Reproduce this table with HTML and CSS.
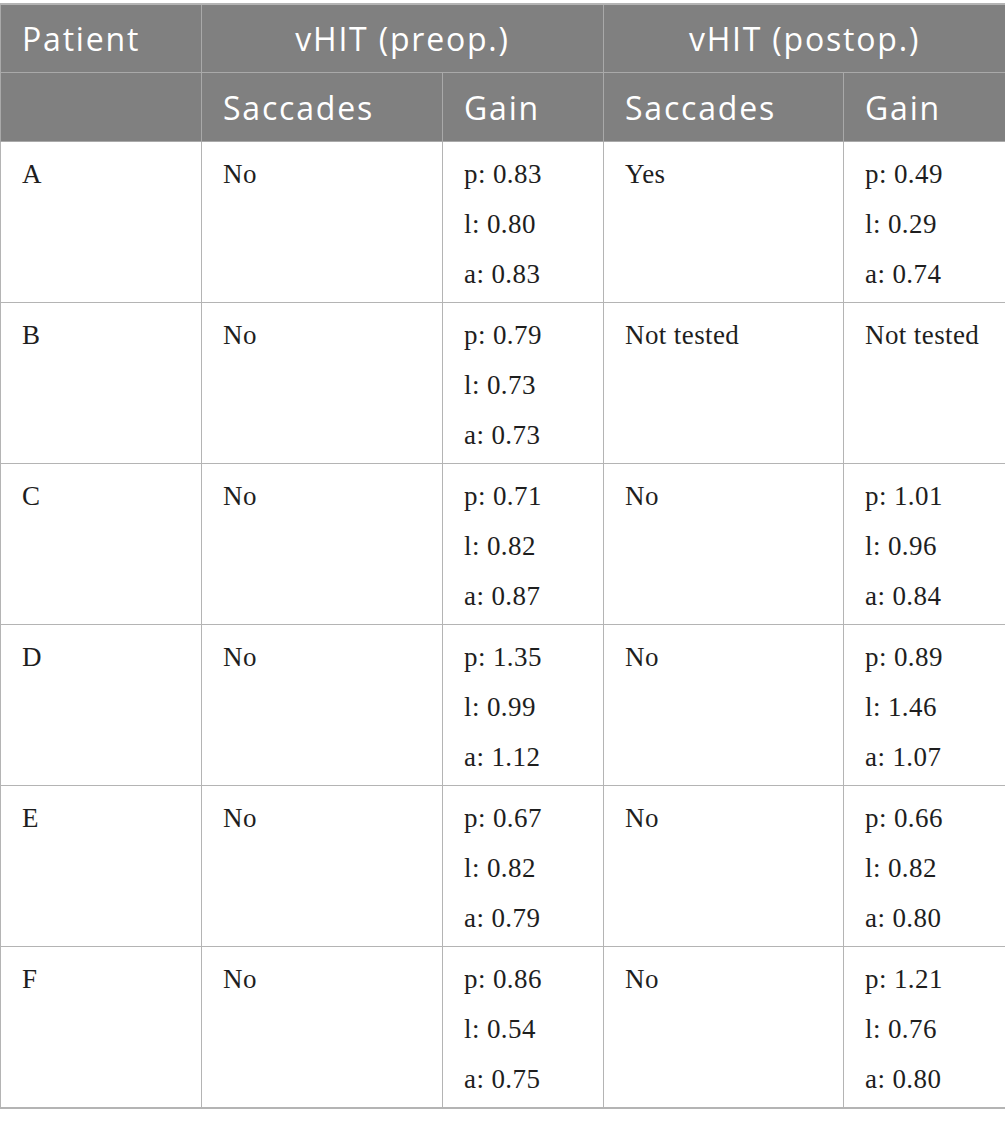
FILE: index.html
```html
<!DOCTYPE html>
<html>
<head>
<meta charset="utf-8">
<link rel="stylesheet" href="styles.css">
</head>
<body>
<table class="data">
  <colgroup>
    <col class="c1"><col class="c2"><col class="c3"><col class="c4"><col class="c5">
  </colgroup>
  <thead>
    <tr class="h1">
      <th>Patient</th>
      <th colspan="2" class="center">vHIT (preop.)</th>
      <th colspan="2" class="center">vHIT (postop.)</th>
    </tr>
    <tr class="h2">
      <th></th>
      <th>Saccades</th>
      <th>Gain</th>
      <th>Saccades</th>
      <th>Gain</th>
    </tr>
  </thead>
  <tbody>
    <tr><td>A</td><td>No</td><td><div>p: 0.83</div><div>l: 0.80</div><div>a: 0.83</div></td><td>Yes</td><td><div>p: 0.49</div><div>l: 0.29</div><div>a: 0.74</div></td></tr>
    <tr><td>B</td><td>No</td><td><div>p: 0.79</div><div>l: 0.73</div><div>a: 0.73</div></td><td>Not tested</td><td>Not tested</td></tr>
    <tr><td>C</td><td>No</td><td><div>p: 0.71</div><div>l: 0.82</div><div>a: 0.87</div></td><td>No</td><td><div>p: 1.01</div><div>l: 0.96</div><div>a: 0.84</div></td></tr>
    <tr><td>D</td><td>No</td><td><div>p: 1.35</div><div>l: 0.99</div><div>a: 1.12</div></td><td>No</td><td><div>p: 0.89</div><div>l: 1.46</div><div>a: 1.07</div></td></tr>
    <tr><td>E</td><td>No</td><td><div>p: 0.67</div><div>l: 0.82</div><div>a: 0.79</div></td><td>No</td><td><div>p: 0.66</div><div>l: 0.82</div><div>a: 0.80</div></td></tr>
    <tr><td>F</td><td>No</td><td><div>p: 0.86</div><div>l: 0.54</div><div>a: 0.75</div></td><td>No</td><td><div>p: 1.21</div><div>l: 0.76</div><div>a: 0.80</div></td></tr>
  </tbody>
</table>
</body>
</html>
```
FILE: styles.css
```css
html, body {
  margin: 0;
  padding: 0;
  background: #ffffff;
}
body {
  padding-top: 3px;
}
.data {
  border-collapse: collapse;
  width: 1005px;
  table-layout: fixed;
  border-top: 2px solid #b4b4b4;
  border-bottom: 2px solid #b4b4b4;
}
.c1 { width: 201px; }
.c2 { width: 241px; }
.c3 { width: 161px; }
.c4 { width: 240px; }
.c5 { width: 162px; }
.data th {
  background: #808080;
  color: #ffffff;
  font-family: "Open Sans", "Noto Sans", sans-serif;
  font-weight: 400;
  font-size: 32px;
  text-align: left;
  border: 1px solid #a9a9a9;
  padding: 0 0 0 21px;
  vertical-align: middle;
  letter-spacing: 1.8px;
}
.data th.center {
  text-align: center;
  padding-left: 0;
}
.data .h1 th { height: 67px; }
.data .h2 th { height: 68px; }
.data td {
  font-family: "Liberation Serif", "Times New Roman", serif;
  font-size: 27px;
  letter-spacing: 0.4px;
  color: #1e1e1e;
  line-height: 50px;
  border: 1px solid #b4b4b4;
  padding: 7px 0 3px 21px;
  height: 150px;
  vertical-align: top;
  box-sizing: content-box;
}
```
